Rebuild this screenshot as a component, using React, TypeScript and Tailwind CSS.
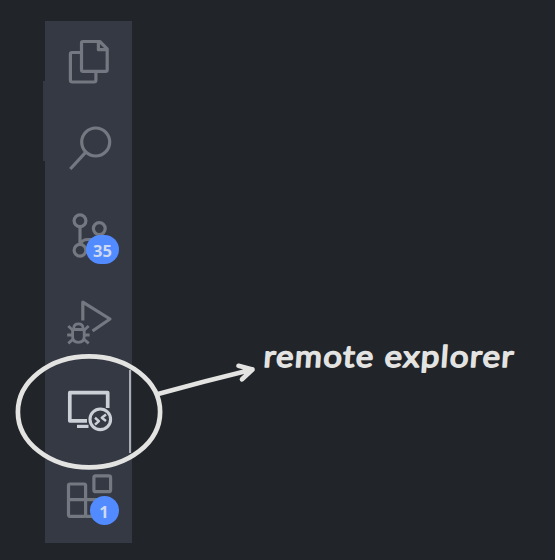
import type { ReactNode } from 'react';

type ItemProps = { label: string; viewBox: string; active?: boolean; badge?: ReactNode; children: ReactNode };

function ActivityItem({ label, viewBox, active, badge, children }: ItemProps) {
  return (
    <button aria-label={label} className={`relative block h-[87px] w-[87px] ${active ? 'text-[#cbd0d7]' : 'text-[#747881]'}`}>
      <svg viewBox={viewBox} className="block h-[87px] w-[87px]" fill="none" stroke="currentColor" strokeWidth="3.2" strokeLinejoin="round">
        {children}
      </svg>
      {badge}
      {active && <span className="absolute top-[1px] right-px h-[83px] w-[2px] bg-[#a9acb2]" />}
    </button>
  );
}

export default function App() {
  return (
    <main className="relative flex h-[560px] w-[555px] overflow-hidden bg-[#212529] pt-[21px] pl-[43px]">
      <div className="mt-[60px] h-[80px] w-[2px] bg-[#343843]" />
      <nav className="flex h-[522px] w-[87px] flex-col bg-[#353944]">
        <ActivityItem label="Explorer" viewBox="45 21 87 87">
          <path d="M83 41.5H99.8L107.2 48.8V69.8Q107.2 71.4 105.6 71.4H83Q81.5 71.4 81.5 69.8V43Q81.5 41.5 83 41.5Z" />
          <path d="M98.4 41.5V49.7H107.2" />
          <path d="M81 52.5H72Q70.4 52.5 70.4 54.2V80Q70.4 82 72.3 82H94Q95.9 82 95.9 80V72" />
        </ActivityItem>
        <ActivityItem label="Search" viewBox="45 108 87 87">
          <circle cx="95.7" cy="142" r="14" />
          <path d="M85.6 152.3L70.3 169" />
        </ActivityItem>
        <ActivityItem
          label="Source Control"
          viewBox="45 195 87 87"
          badge={
            <span className="absolute top-[40px] left-[41px] flex h-[29px] w-[33px] items-center justify-center rounded-full bg-[#528bff] pt-[3px] font-['Noto_Sans',sans-serif] text-[16.5px] leading-none font-bold text-[#ced9f0]">
              35
            </span>
          }
        >
          <circle cx="80" cy="220.7" r="5.9" />
          <circle cx="99.3" cy="228.6" r="5.9" />
          <circle cx="80" cy="250.3" r="5.9" />
          <path d="M80 227V244M80.5 244Q82 239.5 88 239.5H93Q98 239.5 99.3 234.8" />
        </ActivityItem>
        <ActivityItem label="Run and Debug" viewBox="45 282 87 87">
          <path d="M82.8 320.5V302.2L110 319L92.5 331" />
          <g strokeWidth="2.8">
            <path d="M72.6 329.5H84.2V336.5Q84.2 342.3 78.4 342.3Q72.6 342.3 72.6 336.5ZM73.8 329.5V328Q73.8 323.8 78.4 323.8Q83 323.8 83 328V329.5" />
            <path d="M68.3 326L72.5 330M88.7 326L84.3 330M67.2 335H72.5M84.3 335H89.6M68.3 343.4L73.2 339M88.7 343.4L83.7 339" />
          </g>
        </ActivityItem>
        <ActivityItem label="Remote Explorer" viewBox="45 369 87 87" active>
          <path strokeWidth="3.7" d="M107.7 408V392.7H69.8V420.8H87" />
          <path strokeWidth="3.2" d="M77 426.4H88.5" />
          <circle cx="100.3" cy="419.3" r="10.3" strokeWidth="3.1" />
          <path strokeWidth="2.5" d="M95 417.7L98.9 421.1L95 424.6M106 414.4L101.8 417.7L106 421" />
        </ActivityItem>
        <ActivityItem
          label="Extensions"
          viewBox="45 456 87 87"
          badge={
            <span className="absolute top-[40px] left-[44.5px] flex h-[29px] w-[29px] items-center justify-center rounded-full bg-[#528bff] pt-[3px] font-['Noto_Sans',sans-serif] text-[16.5px] leading-none font-bold text-[#ced9f0]">
              1
            </span>
          }
        >
          <rect x="68.5" y="484" width="17.1" height="32.3" rx="1.5" />
          <path d="M68.3 499.7H101V516.3H85.5" />
          <rect x="93.9" y="475.8" width="16.7" height="15.9" rx="1.8" />
        </ActivityItem>
      </nav>
      <svg className="absolute inset-0 h-[560px] w-[555px]" viewBox="0 0 555 560" fill="none" stroke="#e3e3e2" strokeWidth="4.7" strokeLinecap="round" strokeLinejoin="round">
        <ellipse cx="89" cy="411.9" rx="71.1" ry="55.5" />
        <path d="M158 394Q205 381 252.5 369.5M238.5 365.8L252.5 369.5L242 379.3" />
        <g transform="translate(0 366.5) skewX(-4)" fill="#e3e3e2" strokeWidth="1.5" className="font-[Lato,sans-serif] text-[30px] font-normal tracking-[1.2px]">
          <text x="263" y="0" textLength="111" lengthAdjust="spacingAndGlyphs">remote</text>
          <text x="384" y="0" textLength="130" lengthAdjust="spacingAndGlyphs">explorer</text>
        </g>
      </svg>
    </main>
  );
}
